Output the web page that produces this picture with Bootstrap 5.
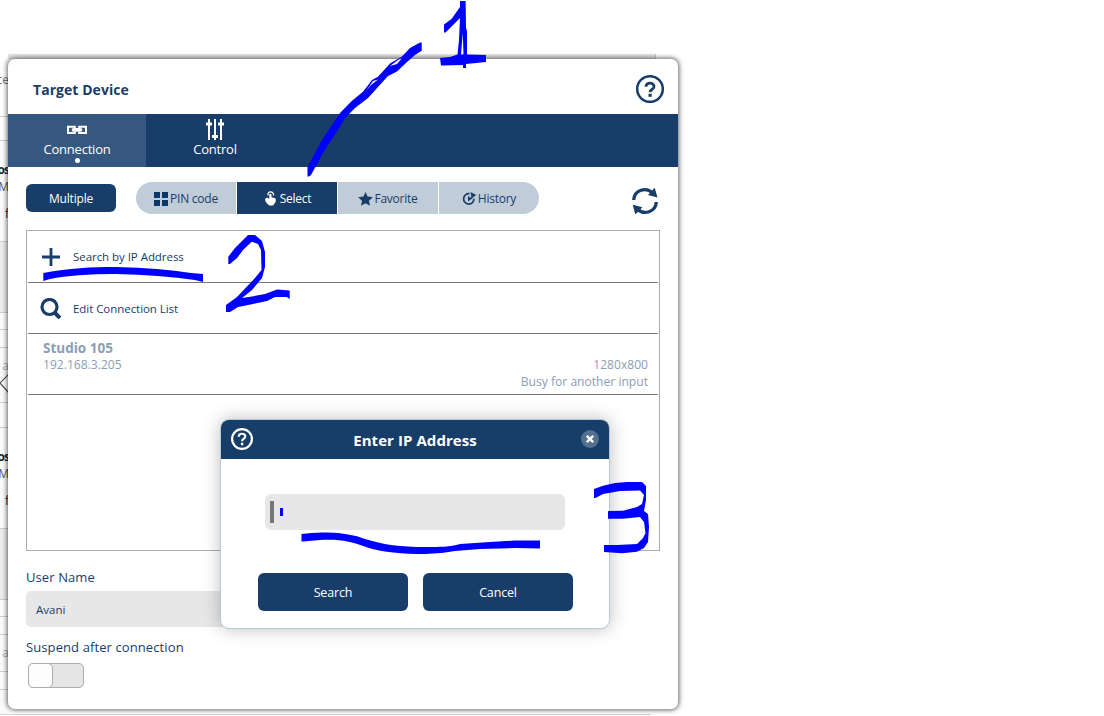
<!DOCTYPE html>
<html lang="en">
<head>
<meta charset="utf-8">
<title>Target Device</title>
<meta name="viewport" content="width=device-width, initial-scale=1">
<link rel="stylesheet" href="https://cdn.jsdelivr.net/npm/bootstrap@5.3.0/dist/css/bootstrap.min.css">
<style>
:root{--navy:#183d69;--steel:#c0ccd8;--mute:#8b9eb6}
body{font-family:"Open Sans","Noto Sans",sans-serif;font-size:12px;line-height:16px;color:var(--navy);background:#fff;width:1104px;height:716px;overflow:hidden}
svg{display:block;flex:none}
.stage{width:1104px;height:716px}
.behind{width:656px;top:0;left:0;height:716px;overflow:hidden;font-family:"Open Sans",sans-serif;color:#555}
.strip{width:9px;overflow:hidden;border-bottom:1px solid #cfcfd3;white-space:nowrap;direction:rtl;background:#fafafa}
.strip.clear{background:#fff}
.tail{width:651px;height:2px;border-top:1px solid #d4d4d4}
.topedge{left:8px;top:54px;width:648px;height:5px;background:#e6e6e6;border-right:1px solid #ccc}
.panel{width:670px;height:650px;margin:59px 0 0 8px;background:#fff;border-radius:7px;box-shadow:0 0 5px 1px rgba(0,0,0,.62)}
.headbar{height:55px;padding:1px 14px 0 25px}
.headbar h1{font-size:14px;font-weight:700;line-height:20px;margin:6px 0 0;letter-spacing:.05px}
.tabs{height:53px;background:var(--navy);color:#fff}
.tabs a{width:138px;color:#fff;font-size:13px;text-decoration:none;padding-top:5px;letter-spacing:-.2px}
.tabs a.active{background:#36577f}
.dot{width:5px;height:5px;border-radius:50%;background:#fff;margin-top:1px}
.tools{height:63px;padding:15px 19px 0 18px}
.pill{width:90px;height:28px;margin-top:2px;border-radius:6px;background:var(--navy);color:#fff;font-size:12px;letter-spacing:-.2px;padding:2px 0 0;border:0}
.seg{margin-left:20px;width:403px;height:32px;gap:1px;border-radius:16px;overflow:hidden}
.seg button{flex:none;width:100px;border:0;padding:1px 0 0;background:var(--steel);color:var(--navy);font-size:12px;letter-spacing:-.25px}
.seg button.active{background:var(--navy);color:#fff}
.listbox{margin:0 18px;height:321px;border:1px solid #adadb1;padding:0 1px}
.entry{border-bottom:1px solid #77777b;font-size:11.5px;letter-spacing:-.05px}
.device{height:61px;padding:6px 10px 0 15px;color:var(--mute);font-size:12.1px;line-height:17px;border-bottom:1px solid #77777b}
.form-area{padding:18px 18px 0;font-size:13px;letter-spacing:.1px}
.field{width:400px;height:36px;margin-top:6px;background:#e7e7e7;border-radius:5px;padding:1px 10px 0;font-size:11.5px;letter-spacing:0}
.toggle{width:56px;height:25px;margin:8px 0 0 2px;border:1px solid #adadad;border-radius:5px;background:#e5e5e5}
.toggle span{display:block;width:25px;height:25px;margin:-1px;border:1px solid #adadad;border-radius:5px;background:#fdfdfd}
.dialog{left:220px;top:419px;width:390px;height:210px;border:1px solid #b9c7d6;border-radius:9px;background:#fff;box-shadow:0 0 18px rgba(0,0,0,.25);overflow:hidden}
.dialog header{height:39px;background:#163e68;color:#fff;padding:0 10px 1px}
.dialog h2{font-size:15px;font-weight:700;margin:1px 4px 0 0;line-height:20px;letter-spacing:.07px}
.closer{width:18px;height:18px;border-radius:50%;background:#54708f;border:0;padding:0}
.ipbox{width:300px;height:36px;margin:35px auto 0 44px;border-radius:6px;background:#e7e7e7;padding-left:5px}
.ipbox i{width:4px;height:22px;background:#757575}
.ipbox b{width:3px;height:8px;background:#00f;margin-left:6px}
.acts{gap:15px;margin:43px 0 0 37px}
.acts button{width:150px;height:38px;border-radius:6px;border:0;padding:2px 0 0;background:var(--navy);color:#fff;font-size:12.5px;letter-spacing:-.15px}
.ink{left:0;top:0;pointer-events:none}
</style>
<script src="https://cdn.jsdelivr.net/npm/bootstrap@5.3.0/dist/js/bootstrap.bundle.min.js"></script>
</head>
<body>
<div class="stage position-relative overflow-hidden">
  <div class="behind position-absolute">
    <div class="strip clear" style="height:117px;padding-top:72px;font-size:12px;color:#777">ce</div>
    <div class="strip clear" style="height:24px"></div>
    <div class="strip" style="height:101px;padding-top:20px;font-size:12px;line-height:17px"><b class="text-dark" style="letter-spacing:-1px">os</b><br>M<br><span class="d-block text-dark" style="padding-top:10px">f</span></div>
    <div class="strip" style="height:71px;background:#ededee"></div>
    <div class="strip" style="height:17px"></div>
    <div class="strip" style="height:18px"></div>
    <div class="strip" style="height:55px;padding-top:10px;font-size:12px;color:#aaa">a
      <svg width="9" height="20" viewBox="0 0 9 20"><path d="M9 0 0 9l9 10" fill="#fff" stroke="#555" stroke-width="1.2"/></svg></div>
    <div class="strip" style="height:25px"></div>
    <div class="strip" style="height:101px;padding-top:20px;font-size:12px;line-height:17px"><b class="text-dark" style="letter-spacing:-1px">os</b><br>M<br><span class="d-block text-dark" style="padding-top:10px">f</span></div>
    <div class="strip" style="height:71px;background:#ededee"></div>
    <div class="strip" style="height:17px"></div>
    <div class="strip" style="height:18px"></div>
    <div class="strip" style="height:37px;padding-top:10px;font-size:12px;color:#aaa">a</div>
    <div class="strip" style="height:18px"></div>
    <div class="strip border-0" style="height:24px"></div>
    <div class="tail"></div>
  </div>
  <div class="topedge position-absolute"></div>

  <main class="d-flex position-relative">
    <section class="panel">
      <div class="headbar d-flex justify-content-between align-items-center">
        <div><h1>Target Device</h1></div>
        <svg class="mt-1" width="28" height="28" viewBox="0 0 28 28" fill="none" stroke="#183d69"><circle cx="14" cy="14" r="12.800" stroke-width="2.500"/><path d="M10 11.700c0-4.900 8.200-4.700 8 .1-.1 2.600-3.900 2.800-3.900 5.400" stroke-width="2.800"/><path d="M14.100 18.800v3" stroke-width="3.300"/></svg>
      </div>
      <nav class="tabs d-flex">
        <a href="#" class="active d-flex flex-column align-items-center">
          <svg width="22" height="22" viewBox="0 0 22 22" fill="none" stroke="#fff" stroke-width="2"><path d="M8.800 9V7.700H2v6.400h6.800v-1.300M13.200 9V7.700H20v6.400h-6.800v-1.300"/><path d="M7.500 10.900h7" stroke-width="3.600" stroke-linecap="round"/></svg>
          <span>Connection</span><i class="dot"></i>
        </a>
        <a href="#" class="d-flex flex-column align-items-center">
          <svg width="20" height="22" viewBox="0 0 20 22" stroke="#fff" stroke-width="2"><path d="M4 0v21M10 0v21M16 0v21"/><path d="M1 5h6M7 17.500h6M13 5h6" stroke-width="3.200"/></svg>
          <span>Control</span>
        </a>
      </nav>
      <div class="tools d-flex align-items-start">
        <button class="pill">Multiple</button>
        <div class="seg d-flex">
          <button class="d-flex align-items-center justify-content-center"><svg style="margin-right:2px" width="14" height="14" viewBox="0 0 14 14" fill="#07396b"><path d="M0 0h6v6H0zM8 0h6v6H8zM0 8h6v6H0zM8 8h6v6H8z"/></svg>PIN code</button>
          <button class="active d-flex align-items-center justify-content-center" style="padding-left:2px"><svg class="me-1" width="11" height="15" viewBox="0 0 11 15"><path d="M3 4.500Q2.800.8 5.600.8T8.700 4.500" fill="none" stroke="#fff" stroke-width="1.300"/><path d="M4.300 4q0-1.300 1.100-1.300T6.500 4v2.300l3 .8q1.400.5 1.400 2c-.1 1.800-.8 3-1.900 4.200L8 14.400H4.600C2.500 13.400.9 11.700.2 9.600-.2 8 .8 6.500 2.300 6.800l2 1z" fill="#fff"/></svg>Select</button>
          <button class="d-flex align-items-center justify-content-center"><svg style="margin-right:1px" width="15" height="14" viewBox="0 0 15 14" fill="#183d69"><path d="m7.500 0 2.100 4.600 5.300.6-3.900 3.500 1 5.100-4.500-2.600L3 13.800l1-5.100L.1 5.200l5.300-.6z"/></svg>Favorite</button>
          <button class="d-flex align-items-center justify-content-center"><svg style="margin-right:1px" width="15" height="14" viewBox="0 0 15 14" fill="none" stroke="#183d69" stroke-width="1.700"><path d="M7.500 1.700A5.200 5.200 0 1 0 12 6.800M6.800 4.500v3.300l3.600-2.600"/><path d="M8.500 0 14.300 3l-4.600 3.300z" fill="#183d69" stroke="none"/></svg>History</button>
        </div>
        <svg class="ms-auto" style="margin-top:5px" width="28" height="28" viewBox="0 0 28 28"><g fill="none" stroke="#183d69" stroke-width="3.300"><path d="M2.700 13C3.300 3 15-.5 21.700 6M25.300 15C24.700 25 13 28.500 6.300 22"/></g><path d="M23.700.8 26.500 10.500 17 8zM4.300 27.500 1.700 17.800l9.700 2.500z" fill="#183d69"/></svg>
      </div>

      <div class="listbox">
        <div class="entry d-flex align-items-center" style="height:52px;padding:1px 0 0 14px"><svg width="18" height="18" viewBox="0 0 18 18" stroke="#183d69" stroke-width="2.800"><path d="M9 0v18M0 9h18"/></svg><span style="margin-left:13px">Search by IP Address</span></div>
        <div class="entry d-flex align-items-center" style="height:51px;padding:1px 0 0 12px"><svg width="21" height="21" viewBox="0 0 21 21" fill="none" stroke="#183d69" stroke-width="3.200"><circle cx="9.500" cy="9" r="7.500"/><path d="m14.500 14.500 5.500 5.500" stroke-width="4"/></svg><span style="margin-left:12px">Edit Connection List</span></div>
        <div class="device d-flex justify-content-between">
          <div style="line-height:16px"><b class="d-block" style="font-size:13.500px">Studio 105</b><span class="d-block" style="padding-top:1px">192.168.3.205</span></div>
          <div class="text-end" style="padding-top:16px">1280x800<br>Busy for another input</div>
        </div>
      </div>

      <div class="form-area">
        <div>User Name</div>
        <div class="field d-flex align-items-center">Avani</div>
        <div style="margin-top:12px">Suspend after connection</div>
        <div class="toggle"><span></span></div>
      </div>
    </section>
  </main>

  <section class="dialog position-absolute">
    <header class="d-flex align-items-center justify-content-between">
      <svg width="22" height="22" viewBox="0 0 28 28" fill="none" stroke="#fff"><circle cx="14" cy="14" r="12.600" stroke-width="2.800"/><path d="M9.800 11.200c0-5.300 8.500-5 8.300-.4-.1 3-4 3.100-4 6" stroke-width="2.800"/><path d="M14.100 18.800v3" stroke-width="3"/></svg>
      <h2>Enter IP Address</h2>
      <button class="closer d-flex align-items-center justify-content-center"><svg width="8" height="8" viewBox="0 0 8 8" stroke="#fff" stroke-width="2.300"><path d="m.8.8 6.400 6.400M7.200.8.8 7.200"/></svg></button>
    </header>
    <div class="ipbox d-flex align-items-center"><i></i><b></b></div>
    <div class="acts d-flex"><button>Search</button><button>Cancel</button></div>
  </section>

  <svg class="ink position-absolute" width="1104" height="716" viewBox="0 0 1104 716" fill="#00f" fill-rule="evenodd">
    <path d="M421.700 42.500V50.700L415 55 407 62 397 71.500 388 76 378 87 368 98 355 108 345 118 338 130 328 145 322 155 311 175 309 176.500H307.500V166.700L315 153 322 140 330 128 340 113 352 100.700 363 91.700 372 80 378 76.700 390 63.500 402 56.500 410 48 420 42.500ZM366 91 371 85 378 79.500 373 81ZM390 66 398 60 402 58 397 64Z"/>
    <path d="M460 1h5.600L466 27 467 32V54.500L486 55V62L466 64V68H463V65L441 65.500 440 58 450 57 457.500 54.500 459 40 460 18 445.500 32.500H444V24.500L451.500 19 460 7ZM462.800 33 461 54.500H463.500Z"/>
    <path d="M43.300 273C70 268 90 267 116 267Q160 268 191 273L203 274V282L195 280Q160 275 116 274 75 274 50 279L43.300 281Z"/>
    <path d="M228.300 256.700 235 248 245 238 248 235H255L262 241 265 252V267L262 278 252 290 242 298 252 296.500 265 294 277 289.500 289.700 290.500V299L286.700 297H275L267 301 253 304 238 307 230 312H226V305L237 297 255 278 261.500 270 261 250 258 244 251.700 241.700 243 250 237 258 230 264H228.300Z"/>
    <path d="M301.500 534Q313 532 328 532.500 350 533 365 539C385 545 400 547 425 547 440 547 450 547 460 544L490 542 515 540.500H540V548.500L515 548 480 549 455 551Q440 554 425 554 390 554 369 548C350 541 340 539 320 540L303 541.500H301.500Z"/>
    <path d="M594 489 603 485.700Q615 482 627 482H642L646 486V500L644 511 648 514 649 527 648 542 644 548 637 551.700 622 553.300 604 552V545H617L637 544 643 538 645.500 533 644 522 640 517 623 518.700H608V511L623 510.700 637 507 642 504 644 495 640 490.500 620 491 603 494 595.500 498H594Z"/>
  </svg>
</div>
</body>
</html>
